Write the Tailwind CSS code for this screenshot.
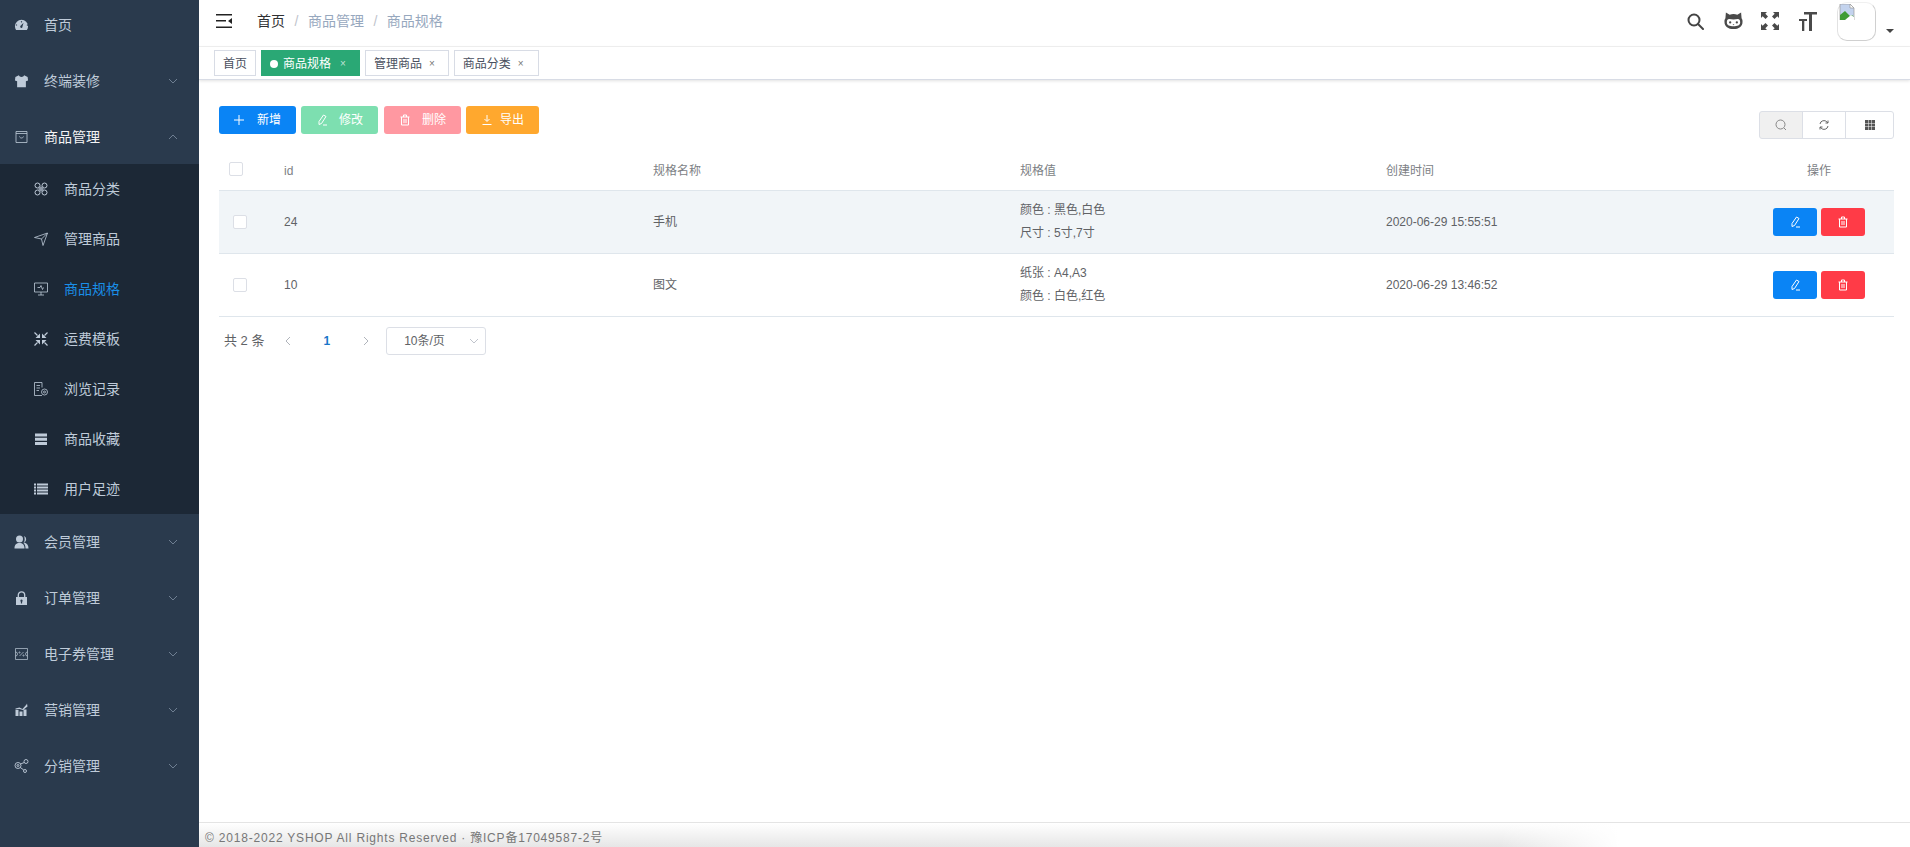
<!DOCTYPE html>
<html lang="zh">
<head>
<meta charset="utf-8">
<script src="https://cdn.jsdelivr.net/npm/@tailwindcss/browser@4"></script>
</head>
<body class="m-0 h-[847px] w-[1910px] overflow-hidden bg-white font-['Liberation_Sans','Noto_Sans_CJK_SC',sans-serif]">
<div class="flex h-[847px] w-[1910px]">
  <!-- Sidebar -->
  <aside class="flex h-full w-[199px] shrink-0 flex-col overflow-hidden bg-[#2a3a4d] text-sm text-[#bfcbd9]">
    <div class="flex h-[50px] items-center pl-[14px]">
      <svg class="h-[14px] w-[15px] fill-[#bfcbd9]" viewBox="0 0 16 16"><path d="M8 2a7.500 7.500 0 0 0-7.500 7.500c0 1.600.5 3 1.300 4.200h12.400a7.500 7.500 0 0 0 1.300-4.200A7.500 7.500 0 0 0 8 2zM8 3.400l.9.9-.9 1-.9-1zM3.200 8l-1 .9-.8-.9.8-1zm10.600 0 1-1 .8 1-.8 1zM8 11.500a1.500 1.500 0 0 1-.7-2.800l3-3.200-1.200 4.300a1.500 1.500 0 0 1-1.100 1.700z"/></svg>
      <span class="ml-[15px]">首页</span>
    </div>
    <div class="mt-[6px] flex h-[50px] items-center pl-[14px]">
      <svg class="h-[14px] w-[15px] fill-[#bfcbd9]" viewBox="0 0 16 16"><path d="M5 1.500 1 3.500.5 7.500l2.500.8V15h10V8.300l2.500-.8L15 3.500l-4-2c-.5 1.200-1.500 1.800-3 1.800S5.500 2.700 5 1.500z"/></svg>
      <span class="ml-[15px]">终端装修</span>
      <svg class="ml-auto mr-[21px] h-[10px] w-[10px] fill-none stroke-[#6f7f92]" viewBox="0 0 10 10"><path d="M1 3l4 4 4-4"/></svg>
    </div>
    <div class="mt-[6px] flex h-[50px] items-center pl-[14px] text-[#f4f4f5]">
      <svg class="h-[14px] w-[15px] fill-none stroke-[#bfcbd9] stroke-[0.800]" viewBox="0 0 14 14"><path d="M1.500 1.500h11v11h-11zM1.500 3.500h11M5 6.500c.5 2 3.500 2 4 0"/></svg>
      <span class="ml-[15px]">商品管理</span>
      <svg class="ml-auto mr-[21px] h-[10px] w-[10px] fill-none stroke-[#6f7f92]" viewBox="0 0 10 10"><path d="M1 7l4-4 4 4"/></svg>
    </div>
    <div class="mt-[2px] flex h-[350px] flex-col bg-[#1c2836]">
      <div class="flex h-[50px] items-center pl-[34px]">
        <svg class="h-[14px] w-[14px] fill-none stroke-[#bfcbd9]" viewBox="0 0 14 14"><circle cx="3.500" cy="3.500" r="2.500"/><circle cx="10.500" cy="3.500" r="2.500"/><circle cx="3.500" cy="10.500" r="2.500"/><circle cx="10.500" cy="10.500" r="2.500"/><rect x="4.500" y="4.500" width="5" height="5" class="fill-[#8b97a6] stroke-none"/></svg>
        <span class="ml-[16px]">商品分类</span>
      </div>
      <div class="flex h-[50px] items-center pl-[34px]">
        <svg class="h-[14px] w-[14px] fill-none stroke-[#bfcbd9] stroke-[0.800]" viewBox="0 0 14 14"><path d="M13.500 1 .5 5.500l7 1.500L9 13.500zM13.500 1 7.500 7"/></svg>
        <span class="ml-[16px]">管理商品</span>
      </div>
      <div class="flex h-[50px] items-center pl-[34px] text-[#1a8fe8]">
        <svg class="h-[14px] w-[14px] fill-none stroke-[#bfcbd9] stroke-[0.800]" viewBox="0 0 14 14"><path d="M.5 1h13v9H.5zM4 13h6M7 10v3M3.500 5.500h2.500l1-2 1.500 4 1-2"/></svg>
        <span class="ml-[16px]">商品规格</span>
      </div>
      <div class="flex h-[50px] items-center pl-[34px]">
        <svg class="h-[14px] w-[14px] fill-[#bfcbd9] stroke-[#bfcbd9]" viewBox="0 0 14 14"><path stroke-width="1.200" d="M.5.5 3.500 3.500M13.500.5 10.500 3.500M.5 13.500 3.500 10.500M13.500 13.500 10.500 10.500"/><path stroke="none" d="M6 6H1.500L6 1.500zM8 6h4.500L8 1.500zM6 8H1.500L6 12.500zM8 8h4.500L8 12.500z"/></svg>
        <span class="ml-[16px]">运费模板</span>
      </div>
      <div class="flex h-[50px] items-center pl-[34px]">
        <svg class="h-[14px] w-[14px] fill-none stroke-[#bfcbd9] stroke-[0.800]" viewBox="0 0 14 14"><path d="M8 13.500H.5V.5H8v5M2.500 3.500h3.500M2.500 6h3.500M2.500 8.500h2.500"/><circle cx="10.500" cy="10" r="3"/><circle cx="10.500" cy="10" r="1"/></svg>
        <span class="ml-[16px]">浏览记录</span>
      </div>
      <div class="flex h-[50px] items-center pl-[34px]">
        <svg class="h-[14px] w-[14px] fill-[#bfcbd9]" viewBox="0 0 14 14"><path d="M1 1.500h12v3H1zM1 5.700h12v3H1zM1 9.900h12v3H1z"/></svg>
        <span class="ml-[16px]">商品收藏</span>
      </div>
      <div class="flex h-[50px] items-center pl-[34px]">
        <svg class="h-[14px] w-[14px] fill-[#bfcbd9]" viewBox="0 0 14 14"><path d="M0 1.500h2v2H0zM3 1.500h11v2H3zM0 4.500h2v2H0zM3 4.500h11v2H3zM0 7.500h2v2H0zM3 7.500h11v2H3zM0 10.500h2v2H0zM3 10.500h11v2H3z"/></svg>
        <span class="ml-[16px]">用户足迹</span>
      </div>
    </div>
    <div class="mt-[3px] flex h-[50px] items-center pl-[14px]">
      <svg class="h-[14px] w-[15px] fill-[#bfcbd9]" viewBox="0 0 14 14"><circle cx="5" cy="4" r="3.500"/><path d="M0 13.500c0-4 2-5.500 5-5.500s5 1.500 5 5.500zM9.500 1a3.500 3.500 0 0 1 0 6.500c3 .5 4.500 2.500 4.500 6h-3c0-3-1-4.500-2-5.500 1.500-2 1.500-4.500.5-7z"/></svg>
      <span class="ml-[15px]">会员管理</span>
      <svg class="ml-auto mr-[21px] h-[10px] w-[10px] fill-none stroke-[#6f7f92]" viewBox="0 0 10 10"><path d="M1 3l4 4 4-4"/></svg>
    </div>
    <div class="mt-[6px] flex h-[50px] items-center pl-[14px]">
      <svg class="h-[14px] w-[15px] fill-[#bfcbd9]" viewBox="0 0 14 14"><path fill-rule="evenodd" d="M1.500 6h11v8h-11zM7 8.500a1.200 1.200 0 0 0-.6 2.200V12.500h1.200V10.700A1.200 1.200 0 0 0 7 8.500z"/><path class="fill-none stroke-[#bfcbd9] stroke-[1.300]" d="M3.800 6V4a3.200 3.200 0 0 1 6.400 0v2"/></svg>
      <span class="ml-[15px]">订单管理</span>
      <svg class="ml-auto mr-[21px] h-[10px] w-[10px] fill-none stroke-[#6f7f92]" viewBox="0 0 10 10"><path d="M1 3l4 4 4-4"/></svg>
    </div>
    <div class="mt-[6px] flex h-[50px] items-center pl-[14px]">
      <svg class="h-[14px] w-[15px] fill-none stroke-[#bfcbd9] stroke-[0.700]" viewBox="0 0 14 14"><path d="M1 1.500h12v11H1zM1 5a2 2 0 0 1 0 4M13 5a2 2 0 0 0 0 4M5 9l4-4"/><circle cx="5" cy="5.500" r=".6"/><circle cx="9" cy="8.500" r=".6"/></svg>
      <span class="ml-[15px]">电子券管理</span>
      <svg class="ml-auto mr-[21px] h-[10px] w-[10px] fill-none stroke-[#6f7f92]" viewBox="0 0 10 10"><path d="M1 3l4 4 4-4"/></svg>
    </div>
    <div class="mt-[6px] flex h-[50px] items-center pl-[14px]">
      <svg class="h-[14px] w-[15px] fill-[#bfcbd9]" viewBox="0 0 14 14"><path d="M1 7h3v6H1zM5 8.500h3V13H5zM9 6.500h3V13H9zM1 5.500l4-1 3 1.500L12 1.500l.5-1 .5 3-4.500 3.500L5 6 1 6.500z"/></svg>
      <span class="ml-[15px]">营销管理</span>
      <svg class="ml-auto mr-[21px] h-[10px] w-[10px] fill-none stroke-[#6f7f92]" viewBox="0 0 10 10"><path d="M1 3l4 4 4-4"/></svg>
    </div>
    <div class="mt-[6px] flex h-[50px] items-center pl-[14px]">
      <svg class="h-[14px] w-[15px] fill-none stroke-[#bfcbd9] stroke-[0.900]" viewBox="0 0 14 14"><circle cx="3.500" cy="6.500" r="3"/><circle cx="3.500" cy="6.500" r="1"/><circle cx="11.500" cy="2.500" r="2"/><circle cx="10.500" cy="12" r="1.500"/><path d="M6 5l3.800-1.500M5.800 8.500 9.300 11"/></svg>
      <span class="ml-[15px]">分销管理</span>
      <svg class="ml-auto mr-[21px] h-[10px] w-[10px] fill-none stroke-[#6f7f92]" viewBox="0 0 10 10"><path d="M1 3l4 4 4-4"/></svg>
    </div>
  </aside>

  <!-- Main -->
  <main class="flex h-full min-w-0 flex-1 flex-col">
    <header class="flex h-[47px] shrink-0 items-center border-b border-[#f2f2f2] pb-[4px] pl-[17px] pr-[16px]">
      <svg class="h-4 w-4 fill-[#222]" viewBox="0 0 16 16"><path d="M0 1h16v1.500H0zM0 7h10v1.500H0zM0 13.500h16V15H0zM12 8l4-3v6z"/></svg>
      <div class="ml-[25px] flex items-center text-sm text-[#97a8be]">
        <span class="text-[#303133]">首页</span>
        <span class="mx-[9.5px] text-[#c0c4cc]">/</span>
        <span>商品管理</span>
        <span class="mx-[9.5px] text-[#c0c4cc]">/</span>
        <span>商品规格</span>
      </div>
      <div class="ml-auto flex items-center">
        <svg class="h-[17px] w-[17px] fill-none stroke-[#444] stroke-[2]" viewBox="0 0 17 17"><circle cx="7" cy="7" r="5.500"/><path d="M11 11l5 5" stroke-linecap="round"/></svg>
        <svg class="ml-[20px] h-[20px] w-[19px] fill-[#4a4a4a]" viewBox="0 0 20 20"><path fill-rule="evenodd" d="M2 1l4 2.500a11 11 0 0 1 8 0L18 1l.5 6c1 1.300 1 2.500 1 4 0 5-4 7.500-9.500 7.500S.5 16 .5 11c0-1.500 0-2.700 1-4zM5.500 8C3.500 8 3 9.500 3 11.500 3 14.500 6 15.500 10 15.500s7-1 7-4C17 9.500 16.500 8 14.500 8c-1.300 0-3 .4-4.500.4S6.800 8 5.500 8z"/><circle cx="6.500" cy="11.500" r="1.200"/><circle cx="13.500" cy="11.500" r="1.200"/><path d="M9 13.500h2l-1 1z"/></svg>
        <svg class="ml-[18px] h-[18px] w-[18px] fill-[#4a4a4a]" viewBox="0 0 18 18"><path d="M0 0h6L4.300 1.700 7 4.500 4.500 7 1.700 4.300 0 6zM18 0v6l-1.700-1.700L13.500 7 11 4.500l2.700-2.800L12 0zM0 18v-6l1.700 1.700L4.500 11 7 13.500l-2.700 2.800L6 18zM18 18h-6l1.700-1.700L11 13.500l2.500-2.500 2.800 2.700L18 12z"/></svg>
        <svg class="ml-[20px] h-[19px] w-[18px] fill-[#4a4a4a]" viewBox="0 0 18 19"><path d="M5 0h13v2.500h-5V19h-3V2.500H5zM0 7h8v2H5.300v10H3V9H0z"/></svg>
        <div class="relative ml-[20px] h-[39px] w-[39px] rounded-[10px] border border-[#d0d0d0] border-t-[#f0f0f0] border-l-[#e2e2e2]">
          <svg class="absolute left-[1px] top-[1px] h-[16px] w-[16px]" viewBox="0 0 16 16"><path d="M1 0h10l4 4v12H1z" fill="#c3d3ee" stroke="#9a9a9a" stroke-width=".7"/><path d="M11 0v4h4z" fill="#fff" stroke="#9a9a9a" stroke-width=".7"/><path d="M1 16V11l5-4 5 5 2-1 2 2v3z" fill="#3f9c35"/><path d="M6 16l6-5 3 2v3z" fill="#fff"/></svg>
        </div>
        <span class="ml-[10px] mt-[20px] h-0 w-0 border-x-[4px] border-t-[4px] border-x-transparent border-t-[#444]"></span>
      </div>
    </header>

    <nav class="flex h-[33px] shrink-0 items-start gap-[5px] border-b border-[#d8dce5] pl-[15px] pt-[3px] text-xs text-[#495060] shadow-[0_1px_3px_0_rgba(0,0,0,0.12)]">
      <span class="flex h-[26px] items-center border border-[#d8dce5] bg-white px-[8px] pt-[1px]">首页</span>
      <span class="flex h-[26px] items-center border border-[#2aa875] bg-[#2aa875] pl-[8px] pr-[13px] pt-[1px] text-white"><span class="mr-[5px] h-2 w-2 rounded-full bg-white"></span>商品规格<span class="ml-[9px] text-[10px] leading-none text-white/70">×</span></span>
      <span class="flex h-[26px] items-center border border-[#d8dce5] bg-white pl-[8px] pr-[13px] pt-[1px]">管理商品<span class="ml-[7px] text-[10px] leading-none text-[#777]">×</span></span>
      <span class="flex h-[26px] items-center border border-[#d8dce5] bg-white pl-[8px] pr-[14px] pt-[1px]">商品分类<span class="ml-[7px] text-[10px] leading-none text-[#777]">×</span></span>
    </nav>

    <section class="min-h-0 flex-1 pl-[20px] pr-[16px] pt-[26px]">
      <div class="flex items-start">
        <div class="flex gap-[5px] text-xs text-white">
          <button class="flex h-[28px] w-[77px] items-center justify-center rounded-[3px] bg-[#0a84f5]">
            <svg class="mr-[12px] h-[12px] w-[12px] fill-none stroke-white" viewBox="0 0 12 12"><path d="M6 1v10M1 6h10"/></svg><span class="mr-[1px]">新增</span>
          </button>
          <button class="flex h-[28px] w-[77px] items-center justify-center rounded-[3px] bg-[#7ddfb0]">
            <svg class="mr-[11px] h-[12px] w-[12px] fill-none stroke-white" viewBox="0 0 12 12"><path d="M7.500 1 10 2.500 5.500 9.500 3 10.500 3 7.500zM7 11h4"/></svg>修改
          </button>
          <button class="ml-[1px] flex h-[28px] w-[77px] items-center justify-center rounded-[3px] bg-[#ff98a1]">
            <svg class="mr-[11px] h-[12px] w-[12px] fill-none stroke-white" viewBox="0 0 12 12"><path d="M1.500 3h9M4.500 3V1h3v2M2.500 3v8h7V3M5 5v4M7 5v4"/></svg>删除
          </button>
          <button class="flex h-[28px] w-[73px] items-center justify-center rounded-[3px] bg-[#ffa82e]">
            <svg class="mr-[7px] h-[12px] w-[12px] fill-none stroke-white" viewBox="0 0 12 12"><path d="M6 1v6M3.500 5 6 7.500 8.500 5M1.500 10.500h9"/></svg>导出
          </button>
        </div>
        <div class="ml-auto mt-[5px] flex h-[28px] w-[135px]">
          <span class="flex w-[44px] items-center justify-center rounded-l-[3px] border border-[#dcdfe6] bg-[#f0f0f0]"><svg class="h-[12px] w-[12px] fill-none stroke-[#888]" viewBox="0 0 12 12"><circle cx="5.500" cy="5.500" r="4.500"/><path d="M9 9l2 2"/></svg></span>
          <span class="-ml-px flex w-[44px] items-center justify-center border border-[#dcdfe6]"><svg class="h-[12px] w-[12px] fill-none stroke-[#666]" viewBox="0 0 12 12"><path d="M2 5a4 4 0 0 1 7-2l1 1M10 7a4 4 0 0 1-7 2L2 8M10 1.500V4H7.500M2 10.500V8h2.500"/></svg></span>
          <span class="-ml-px flex flex-1 items-center justify-center rounded-r-[3px] border border-[#dcdfe6]"><svg class="h-[12px] w-[12px] fill-[#555]" viewBox="0 0 12 12"><path d="M1 1h3v3H1zM4.500 1h3v3h-3zM8 1h3v3H8zM1 4.500h3v3H1zM4.500 4.500h3v3h-3zM8 4.500h3v3H8zM1 8h3v3H1zM4.500 8h3v3h-3zM8 8h3v3H8z"/></svg></span>
        </div>
      </div>

      <div class="mt-[11px] text-xs text-[#606266]">
        <div class="grid h-[41px] grid-cols-[55px_369px_367px_366px_368px_150px] items-center border-b border-[#dfe6ec] pt-[1px] font-normal text-[#7d7f85]">
          <span class="ml-[10px] mt-[-3px] h-[14px] w-[14px] rounded-[2px] border border-[#dcdfe6] bg-white"></span>
          <span class="pl-[10px]">id</span>
          <span class="pl-[10px]">规格名称</span>
          <span class="pl-[10px]">规格值</span>
          <span class="pl-[10px]">创建时间</span>
          <span class="text-center">操作</span>
        </div>
        <div class="grid h-[63px] grid-cols-[55px_369px_367px_366px_368px_150px] items-center border-b border-[#dfe6ec] bg-[#f1f5f8]">
          <span class="ml-[14px] h-[14px] w-[14px] rounded-[2px] border border-[#dcdfe6] bg-white"></span>
          <span class="pl-[10px]">24</span>
          <span class="pl-[10px]">手机</span>
          <div class="pl-[10px] leading-[23px]"><p>颜色 : 黑色,白色</p><p>尺寸 : 5寸,7寸</p></div>
          <span class="pl-[10px]">2020-06-29 15:55:51</span>
          <div class="flex justify-center gap-[4px]">
            <span class="flex h-[28px] w-[44px] items-center justify-center rounded-[3px] bg-[#0a84f5]"><svg class="h-[12px] w-[12px] fill-none stroke-white" viewBox="0 0 12 12"><path d="M7.500 1 10 2.500 5.500 9.500 3 10.500 3 7.500zM7 11h4"/></svg></span>
            <span class="flex h-[28px] w-[44px] items-center justify-center rounded-[3px] bg-[#ff3b47]"><svg class="h-[12px] w-[12px] fill-none stroke-white" viewBox="0 0 12 12"><path d="M1.500 3h9M4.500 3V1h3v2M2.500 3v8h7V3M5 5v4M7 5v4"/></svg></span>
          </div>
        </div>
        <div class="grid h-[63px] grid-cols-[55px_369px_367px_366px_368px_150px] items-center border-b border-[#dfe6ec]">
          <span class="ml-[14px] h-[14px] w-[14px] rounded-[2px] border border-[#dcdfe6] bg-white"></span>
          <span class="pl-[10px]">10</span>
          <span class="pl-[10px]">图文</span>
          <div class="pl-[10px] leading-[23px]"><p>纸张 : A4,A3</p><p>颜色 : 白色,红色</p></div>
          <span class="pl-[10px]">2020-06-29 13:46:52</span>
          <div class="flex justify-center gap-[4px]">
            <span class="flex h-[28px] w-[44px] items-center justify-center rounded-[3px] bg-[#0a84f5]"><svg class="h-[12px] w-[12px] fill-none stroke-white" viewBox="0 0 12 12"><path d="M7.500 1 10 2.500 5.500 9.500 3 10.500 3 7.500zM7 11h4"/></svg></span>
            <span class="flex h-[28px] w-[44px] items-center justify-center rounded-[3px] bg-[#ff3b47]"><svg class="h-[12px] w-[12px] fill-none stroke-white" viewBox="0 0 12 12"><path d="M1.500 3h9M4.500 3V1h3v2M2.500 3v8h7V3M5 5v4M7 5v4"/></svg></span>
          </div>
        </div>
      </div>

      <div class="mt-[10px] flex h-[28px] items-center pl-[5px] text-[13px] text-[#606266]">
        <span>共 2 条</span>
        <svg class="ml-[19px] h-[10px] w-[10px] fill-none stroke-[#b0b4bb]" viewBox="0 0 10 10"><path d="M7 1 3 5l4 4"/></svg>
        <span class="ml-[30px] text-xs font-bold text-[#1976c9]">1</span>
        <svg class="ml-[31px] h-[10px] w-[10px] fill-none stroke-[#b0b4bb]" viewBox="0 0 10 10"><path d="M3 1l4 4-4 4"/></svg>
        <span class="ml-[15px] flex h-[28px] w-[100px] items-center rounded-[3px] border border-[#dcdfe6] pl-[17px] text-xs">10条/页<svg class="ml-auto mr-[6px] h-[10px] w-[10px] fill-none stroke-[#c0c4cc]" viewBox="0 0 10 10"><path d="M1 3l4 4 4-4"/></svg></span>
      </div>
    </section>

    <footer class="h-[25px] shrink-0 border-t border-[#e4e4e4] bg-[linear-gradient(to_right,transparent_76%,#fff_83%),linear-gradient(to_bottom,#fff,#e6e6e6)] pl-[6px] pt-[7px] text-xs leading-[17px] tracking-[0.8px] text-[#777]">© 2018-2022 YSHOP All Rights Reserved · 豫ICP备17049587-2号</footer>
  </main>
</div>
</body>
</html>
